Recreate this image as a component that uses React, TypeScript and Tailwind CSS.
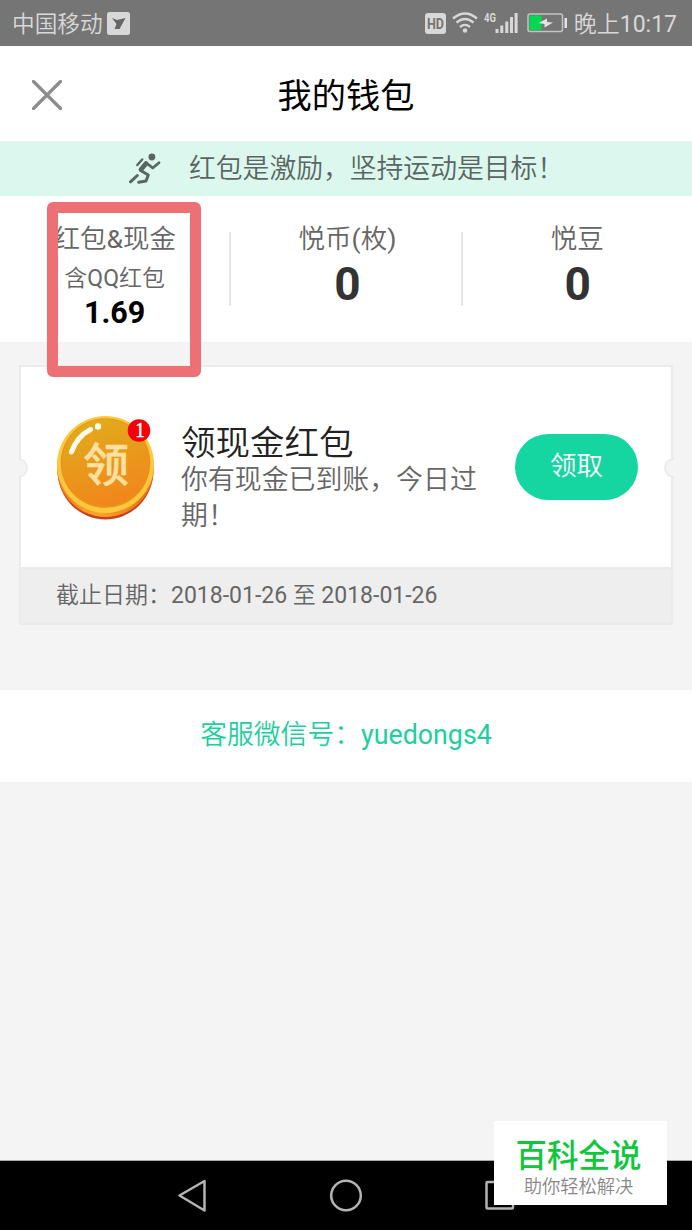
import type { ReactNode } from "react";

function StatusBar() {
  return (
    <div className="flex h-[46px] items-center justify-between bg-[#757575] pl-[12px] pr-[15px] text-[#d8d8d8]">
      <div className="flex items-center gap-[4px]">
        <span className="pt-[3px] text-[22.7px] font-[350] leading-[46px]">中国移动</span>
        <svg width="23" height="23" viewBox="0 0 23 23">
          <rect width="23" height="23" rx="2.5" fill="#d8d8d8" />
          <path d="M5 6 L10 8 L18.500 6 L12.500 17 L7.500 17 L9.500 12 Z" fill="#666" />
        </svg>
      </div>
      <div className="flex items-center">
        <svg width="148" height="46" viewBox="0 0 148 46">
          <rect x="0" y="13" width="21" height="21" rx="3" fill="#d8d8d8" />
          <text x="10.500" y="28.500" textAnchor="middle" fontSize="14" fontWeight="700" fill="#757575" textLength="17" lengthAdjust="spacingAndGlyphs">
            HD
          </text>
          <g fill="none" stroke="#d8d8d8" strokeWidth="2.300">
            <path d="M28 18.500 Q40 8.500 52 18.500" />
            <path d="M31.500 22.600 Q40 15.500 48.500 22.600" />
            <path d="M35 27 Q40 22.800 45 27" />
          </g>
          <circle cx="40" cy="30.500" r="2.200" fill="#d8d8d8" />
          <text x="59" y="22" fontSize="12.500" fontWeight="700" fill="#d8d8d8" textLength="12" lengthAdjust="spacingAndGlyphs">
            4G
          </text>
          <g fill="#d8d8d8">
            <rect x="70.500" y="29" width="3" height="4" />
            <rect x="75.300" y="25.500" width="3" height="7.500" />
            <rect x="80.300" y="21.500" width="3" height="11.500" />
            <rect x="85" y="17" width="3" height="16" />
            <rect x="89.600" y="13" width="3" height="20" />
          </g>
          <rect x="103" y="14" width="34.500" height="17.500" rx="2" fill="none" stroke="#c4c4c4" strokeWidth="1.500" />
          <rect x="104.500" y="15.500" width="12" height="14.500" fill="#05d850" />
          <rect x="139.500" y="18" width="2.500" height="10" fill="#e4e4e4" />
          <path d="M113.500 23 L122 18.500 L122 22 L128 22.500 L119.500 27.500 L119.500 24 Z" fill="#e4e4e4" />
        </svg>
        <span className="ml-[1px] pt-[3px] text-[23px] font-[350] leading-[46px]">
          晚上<span className="font-normal">10:17</span>
        </span>
      </div>
    </div>
  );
}

function RunnerIcon() {
  return (
    <svg width="32" height="32" viewBox="0 0 32 32" fill="none" stroke="#5a6661" strokeLinecap="round" strokeLinejoin="round">
      <circle cx="22.900" cy="4" r="3.400" fill="#5a6661" stroke="none" />
      <path d="M17 9.700 L23.700 15 L30 9.700" strokeWidth="2.800" />
      <path d="M17 10.500 L12 16.500" strokeWidth="4.800" />
      <path d="M11.700 17.500 L19.300 22 L17 28 L9.700 29.200" strokeWidth="3" />
      <path d="M8.300 22.500 L1.500 28.800" strokeWidth="3" />
      <path d="M8.300 12 L13.200 6.500" strokeWidth="2.500" />
    </svg>
  );
}

function Stat({ title, children }: { title: ReactNode; children: ReactNode }) {
  return (
    <div className="flex flex-1 flex-col items-center pt-[26px]">
      <span className="text-[26.5px] font-[350] leading-[34px] text-[#666]">{title}</span>
      {children}
    </div>
  );
}

function Coin() {
  return (
    <svg width="100" height="108" viewBox="0 0 100 108" className="mt-[3px] shrink-0">
      <defs>
        <linearGradient id="face" x1="0.300" y1="0" x2="0.600" y2="1">
          <stop offset="0" stopColor="#e0ac1c" />
          <stop offset="1" stopColor="#f2851b" />
        </linearGradient>
        <linearGradient id="side" x1="0" y1="0" x2="1" y2="0">
          <stop offset="0" stopColor="#f47b16" />
          <stop offset="0.400" stopColor="#fca52c" />
          <stop offset="1" stopColor="#ed6c12" />
        </linearGradient>
      </defs>
      <ellipse cx="49.500" cy="55.500" rx="48" ry="49" fill="#c9401c" />
      <ellipse cx="49.500" cy="53.500" rx="48.300" ry="48.500" fill="url(#side)" />
      <ellipse cx="49.500" cy="49.500" rx="48.500" ry="48.500" fill="#fdc93c" />
      <circle cx="49.500" cy="48" r="44.800" fill="#e9911b" />
      <circle cx="49.500" cy="47.500" r="43.500" fill="url(#face)" />
      <path d="M15.500 37 C19 27 25 19.500 34.500 14.500" fill="none" stroke="#fffbe8" strokeWidth="5" strokeLinecap="round" />
      <circle cx="42" cy="11.500" r="3.200" fill="#fffbe8" />
      <text x="50" y="66" textAnchor="middle" fontSize="46" fontWeight="500" fill="#ffe0a0" stroke="#ffe0a0" strokeWidth="0.500">
        领
      </text>
      <circle cx="83" cy="15.500" r="11.300" fill="#f40009" />
      <text x="84" y="22" textAnchor="middle" fontSize="20" fill="#fff" stroke="#fff" strokeWidth="0.400" className="font-['Liberation_Serif',serif]">
        1
      </text>
    </svg>
  );
}

function Coupon() {
  return (
    <div className="relative mx-[19px] mt-[23px] h-[260px] border-2 border-[#ebebeb] bg-white">
      <div className="flex h-[200px] items-center pl-[35px] pr-[33px]">
        <Coin />
        <div className="ml-[25px] w-[310px] pt-[24px]">
          <div className="text-[34.500px] font-[350] leading-[38px] text-[#222]">领现金红包</div>
          <div className="text-[26.900px] font-[350] leading-[36px] text-[#666]">你有现金已到账，今日过期！</div>
        </div>
        <button className="ml-auto h-[66px] w-[123px] shrink-0 rounded-full bg-[#15d6a0] pb-[3px] text-[26.500px] font-[350] text-white">
          领取
        </button>
      </div>
      <div className="h-[56px] border-t-2 border-[#ebebeb] bg-[#eeeeee] pl-[35px] text-[23px] font-[350] leading-[54px] text-[#666]">
        截止日期：<span className="font-normal">2018-01-26</span> 至{" "}
        <span className="font-normal">2018-01-26</span>
      </div>
      {/* ticket notches */}
      <div className="absolute -left-[3px] top-[91px] h-[20px] w-[10px] rounded-r-full border-2 border-l-0 border-[#ebebeb] bg-[#f4f4f4]" />
      <div className="absolute -right-[3px] top-[91px] h-[20px] w-[10px] rounded-l-full border-2 border-r-0 border-[#ebebeb] bg-[#f4f4f4]" />
    </div>
  );
}

export default function App() {
  return (
    <div className="relative flex h-[1230px] w-[692px] flex-col overflow-hidden bg-[#f4f4f4] font-['Roboto','Noto_Sans_CJK_SC',sans-serif]">
      <StatusBar />

      <header className="grid h-[95px] grid-cols-[1fr_auto_1fr] items-center bg-white">
        <svg width="30" height="30" viewBox="0 0 30 30" className="ml-[32px] mt-[2px]">
          <path d="M1.500 1.500 L28.500 28.500 M28.500 1.500 L1.500 28.500" stroke="#8c8c8c" strokeWidth="3.200" strokeLinecap="round" />
        </svg>
        <h1 className="pt-[5px] text-[34.200px] leading-[48px] text-black">我的钱包</h1>
      </header>

      <div className="flex h-[55px] items-center bg-[#dcf8ee] pl-[129px] text-[#5a6661]">
        <RunnerIcon />
        <span className="ml-[28px] text-[26.800px] font-[350] leading-[52px]">红包是激励，坚持运动是目标！</span>
      </div>

      <section className="flex h-[146px] bg-white">
        <Stat title={<>红包<span className="font-normal">&</span>现金</>}>
          <span className="mt-[8px] text-[23px] font-[350] leading-[30px] text-[#666]">
            含<span className="font-normal">QQ</span>红包
          </span>
          <span className="text-[30.500px] font-bold leading-[38px] text-black">1.69</span>
        </Stat>
        <div className="mt-[36px] h-[74px] w-[2px] bg-[#e6e6e6]" />
        <Stat title={<span className="pl-[3px]">悦币<span className="font-normal">(</span>枚<span className="font-normal">)</span></span>}>
          <span className="mt-[5px] pl-[3px] text-[46px] font-bold leading-[46px] text-[#333]">0</span>
        </Stat>
        <div className="mt-[36px] h-[74px] w-[2px] bg-[#e6e6e6]" />
        <Stat title="悦豆">
          <span className="mt-[5px] pl-[1px] text-[46px] font-bold leading-[46px] text-[#333]">0</span>
        </Stat>
      </section>

      <Coupon />

      <div className="mt-[65px] h-[92px] bg-white text-center text-[26.800px] font-[350] leading-[90px] text-[#1cd09c]">
        客服微信号：<span className="font-normal">yuedongs4</span>
      </div>

      <nav className="mt-auto h-[70px] border-t border-[#aaa] bg-black">
        <svg width="692" height="69" viewBox="0 0 692 69" fill="none" stroke="#b4b4b4" strokeWidth="2.500" strokeLinejoin="round">
          <path d="M179.500 34.500 L204.500 20 V49.500 Z" />
          <circle cx="346" cy="34.500" r="14.800" />
          <rect x="486.500" y="21" width="26.500" height="26.500" rx="1" />
        </svg>
      </nav>

      {/* highlight around the cash balance */}
      <div className="absolute left-[47px] top-[202px] h-[175px] w-[154px] rounded-[6px] border-[11px] border-[#ed7074]" />

      <div className="absolute left-[494px] top-[1121px] flex h-[84px] w-[173px] flex-col items-center bg-white pr-[4px] pt-[17px]">
        <span className="text-[31.500px] font-medium leading-[38px] text-[#10c63c]">百科全说</span>
        <span className="text-[18.300px] font-[350] leading-[22px] text-[#888]">助你轻松解决</span>
      </div>
    </div>
  );
}
